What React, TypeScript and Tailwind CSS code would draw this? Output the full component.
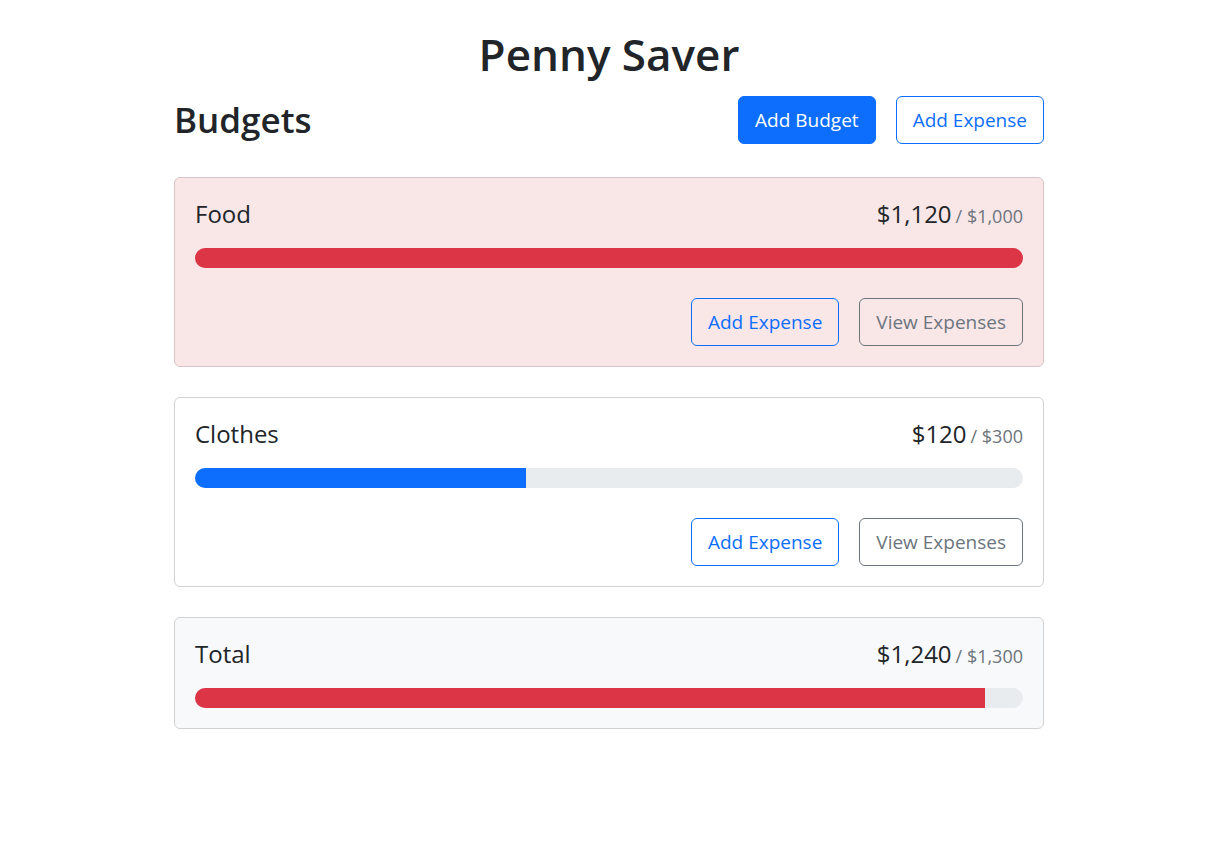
import React from "react";

type Budget = { name: string; amount: number; max: number };

const fmt = (n: number) => "$" + n.toLocaleString("en-US");

function Progress({ ratio, color }: { ratio: number; color: string }) {
  const pct = Math.min(ratio, 1) * 100;
  return (
    <div className="mt-[21px] h-5 w-full overflow-hidden rounded-full bg-[#e9ecef]">
      <div className={`h-full ${color}`} style={{ width: `${pct}%` }} />
    </div>
  );
}

function BudgetCard({
  name,
  amount,
  max,
  bg,
  border,
  showButtons,
}: Budget & { bg: string; border: string; showButtons: boolean }) {
  const ratio = amount / max;
  const color = ratio < 0.5 ? "bg-[#0d6efd]" : ratio < 0.75 ? "bg-[#ffc107]" : "bg-[#dc3545]";
  return (
    <div className={`rounded-[6px] border p-5 ${bg} ${border}`}>
      <div className="flex h-[29px] items-baseline justify-between pt-[2px]">
        <div className="text-[24px] leading-[1.2]">{name}</div>
        <div className="flex items-baseline">
          <span className="text-[24px] leading-[1.2]">{fmt(amount)}</span>
          <span className="ml-[4px] text-[18px] text-[#6c757d]">/ {fmt(max)}</span>
        </div>
      </div>
      <Progress ratio={ratio} color={color} />
      {showButtons && (
        <div className="mt-[30px] flex justify-end gap-5">
          <button className="h-12 rounded-[6px] border border-[#0d6efd] px-4 text-[19px] text-[#0d6efd]">
            Add Expense
          </button>
          <button className="h-12 rounded-[6px] border border-[#6c757d] px-4 text-[19px] text-[#6c757d]">
            View Expenses
          </button>
        </div>
      )}
    </div>
  );
}

export default function App() {
  return (
    <div
      className="min-h-[862px] bg-white text-[#212529]"
      style={{ fontFamily: '"Open Sans", "Noto Sans", sans-serif' }}
    >
      <div className="ml-[174px] w-[870px] pt-[28px]">
        <h1 className="text-center text-[44px] font-semibold leading-[1.2]">Penny Saver</h1>
        <div className="mt-[15px] flex h-12 items-center justify-between">
          <h2 className="text-[35px] font-semibold leading-[1.2]">Budgets</h2>
          <div className="flex gap-5">
            <button className="h-12 rounded-[6px] border border-[#0d6efd] bg-[#0d6efd] px-4 text-[19px] text-white">
              Add Budget
            </button>
            <button className="h-12 rounded-[6px] border border-[#0d6efd] px-4 text-[19px] text-[#0d6efd]">
              Add Expense
            </button>
          </div>
        </div>
        <div className="mt-[33px] flex flex-col gap-[30px]">
          <BudgetCard
            name="Food"
            amount={1120}
            max={1000}
            bg="bg-[#f9e7e8]"
            border="border-[#d9c5c7]"
            showButtons
          />
          <BudgetCard
            name="Clothes"
            amount={120}
            max={300}
            bg="bg-white"
            border="border-[#d2d2d2]"
            showButtons
          />
          <BudgetCard
            name="Total"
            amount={1240}
            max={1300}
            bg="bg-[#f8f9fa]"
            border="border-[#d2d2d2]"
            showButtons={false}
          />
        </div>
      </div>
    </div>
  );
}
